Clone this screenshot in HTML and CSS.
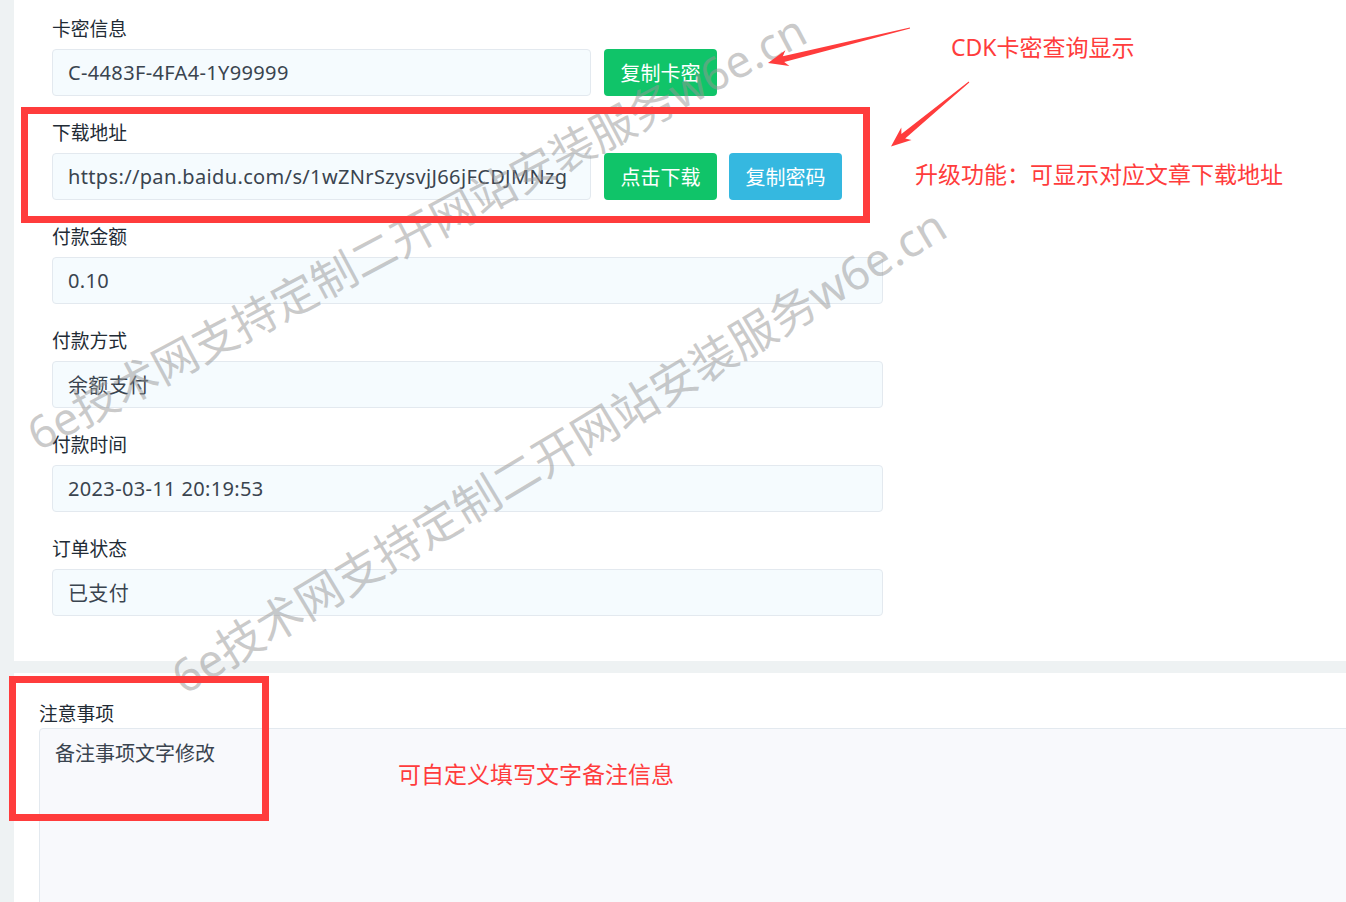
FILE: index.html
```html
<!DOCTYPE html>
<html lang="zh-CN">
<head>
    <meta charset="UTF-8">
    <meta name="viewport" content="width=device-width, initial-scale=1.0">
    <title>订单详情</title>
    <link rel="stylesheet" href="styles.css">
</head>
<body>
    <div class="page">
        <section class="panel order-panel">
            <div class="form-col">
                <div class="field">
                    <label>卡密信息</label>
                    <div class="field-row">
                        <input class="form-control short" type="text" readonly value="C-4483F-4FA4-1Y99999">
                        <button class="btn btn-success">复制卡密</button>
                    </div>
                </div>
                <div class="field">
                    <label>下载地址</label>
                    <div class="field-row">
                        <input class="form-control short" type="text" readonly value="https://pan.baidu.com/s/1wZNrSzysvjJ66jFCDJMNzg">
                        <button class="btn btn-success">点击下载</button>
                        <button class="btn btn-info">复制密码</button>
                    </div>
                </div>
                <div class="field">
                    <label>付款金额</label>
                    <input class="form-control" type="text" readonly value="0.10">
                </div>
                <div class="field">
                    <label>付款方式</label>
                    <input class="form-control" type="text" readonly value="余额支付">
                </div>
                <div class="field">
                    <label>付款时间</label>
                    <input class="form-control" type="text" readonly value="2023-03-11 20:19:53">
                </div>
                <div class="field">
                    <label>订单状态</label>
                    <input class="form-control" type="text" readonly value="已支付">
                </div>
            </div>
        </section>

        <section class="panel notes-panel">
            <label>注意事项</label>
            <textarea class="notes-box" readonly>备注事项文字修改</textarea>
        </section>
    </div>

    <!-- 水印 -->
    <div class="watermark wm-1">6e技术网支持定制二开网站安装服务w6e.cn</div>
    <div class="watermark wm-2">6e技术网支持定制二开网站安装服务w6e.cn</div>

    <!-- 标注 -->
    <div class="mark-box mark-download"></div>
    <div class="mark-box mark-notes"></div>
    <div class="mark-text mark-cdk">CDK卡密查询显示</div>
    <div class="mark-text mark-upgrade">升级功能：可显示对应文章下载地址</div>
    <div class="mark-text mark-custom">可自定义填写文字备注信息</div>

    <svg class="arrows" width="1346" height="902" viewBox="0 0 1346 902">
        <polygon points="768,63 789.4,65.9 784.2,62 910.1,28.5 909.9,27.5 782.8,56.2 785.4,50.3" />
        <polygon points="891,146.5 911.5,139.9 905.2,138.6 969.3,82.4 968.7,81.6 901.4,134 901.3,127.5" />
    </svg>
</body>
</html>
```

FILE: styles.css
```css
:root {
    --page-bg: #eef2f3;
    --success: #10c469;
    --info: #35b8e0;
    --mark-red: #ff3c3c;
    --input-bg: #f5fbfe;
    --input-border: #e3e9ef;
    --label-color: #222b35;
    --text-color: #3a444f;
}

* {
    margin: 0;
    padding: 0;
    box-sizing: border-box;
}

body {
    font-family: "Noto Sans", "Noto Sans CJK SC", sans-serif;
    background-color: var(--page-bg);
    width: 1346px;
    height: 902px;
    overflow: hidden;
    position: relative;
}

.page {
    padding-left: 14px;
}

.panel {
    background-color: #fff;
    overflow: hidden;
}

.panel label {
    display: block;
    font-size: 18.75px;
    line-height: 25px;
    color: var(--label-color);
}

/* 订单信息 */
.order-panel {
    padding: 16px 0 21px 38px;
}

.form-col {
    width: 831px;
}

.field {
    margin-bottom: 24px;
}

.field label {
    margin-bottom: 8px;
}

.field-row {
    display: flex;
    align-items: center;
    gap: 12px;
}

.form-control {
    display: block;
    width: 100%;
    height: 47px;
    padding: 0 15px;
    border: 1px solid var(--input-border);
    border-radius: 4px;
    background-color: var(--input-bg);
    font-family: inherit;
    font-size: 20px;
    letter-spacing: 0.35px;
    color: var(--text-color);
    outline: none;
}

.form-control.short {
    width: 539px;
    flex: none;
    margin-right: 1px;
}

.btn {
    height: 47px;
    padding: 0 16.5px;
    border: none;
    border-radius: 4px;
    font-family: inherit;
    font-size: 20px;
    color: #fff;
    cursor: pointer;
}

.btn-success {
    background-color: var(--success);
}

.btn-info {
    background-color: var(--info);
}

/* 注意事项 */
.notes-panel {
    margin-top: 12px;
    padding: 28px 0 0 25px;
    height: 240px;
}

.notes-panel label {
    margin-bottom: 2px;
}

.notes-box {
    display: block;
    width: 1400px;
    height: 220px;
    padding: 10px 15px;
    border: 1px solid var(--input-border);
    border-radius: 4px;
    background-color: #f8f9fc;
    font-family: inherit;
    font-size: 20px;
    line-height: 30px;
    color: var(--text-color);
    resize: none;
    outline: none;
}

/* 水印 */
.watermark {
    position: absolute;
    white-space: nowrap;
    font-size: 45px;
    line-height: 1;
    color: rgba(150, 150, 150, 0.5);
    pointer-events: none;
}

.wm-1 {
    left: 416px;
    top: 231px;
    transform: translate(-50%, -50%) rotate(-28deg);
}

.wm-2 {
    left: 558px;
    top: 450px;
    font-size: 46px;
    transform: translate(-50%, -50%) rotate(-31deg);
}

/* 红色标注 */
.mark-box {
    position: absolute;
    border: 7px solid var(--mark-red);
}

.mark-download {
    left: 21px;
    top: 107px;
    width: 849px;
    height: 116px;
}

.mark-notes {
    left: 9px;
    top: 676px;
    width: 260px;
    height: 145px;
}

.mark-text {
    position: absolute;
    font-size: 23px;
    line-height: 1;
    color: var(--mark-red);
    white-space: nowrap;
}

.mark-cdk {
    left: 951px;
    top: 36px;
}

.mark-upgrade {
    left: 915px;
    top: 163px;
}

.mark-custom {
    left: 398px;
    top: 763px;
}

.arrows {
    position: absolute;
    left: 0;
    top: 0;
    pointer-events: none;
}

.arrows polygon {
    fill: var(--mark-red);
}
```
